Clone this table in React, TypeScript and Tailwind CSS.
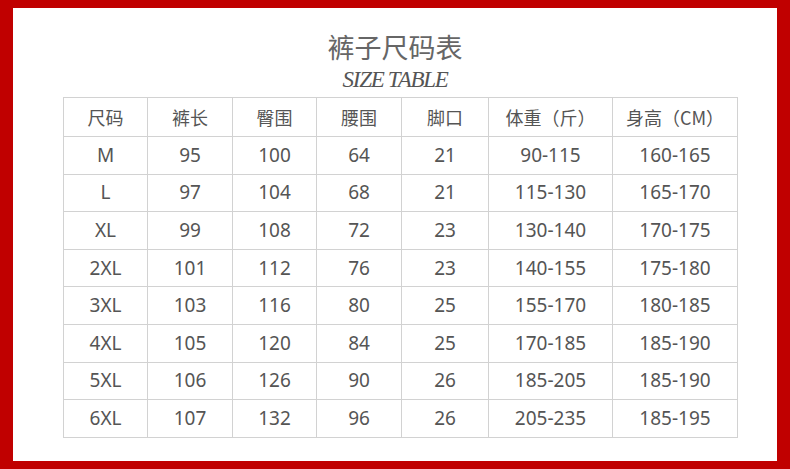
import React from "react";

const headers = ["尺码", "裤长", "臀围", "腰围", "脚口", "体重（斤）", "身高（CM）"];
const rows: string[][] = [
  ["M", "95", "100", "64", "21", "90-115", "160-165"],
  ["L", "97", "104", "68", "21", "115-130", "165-170"],
  ["XL", "99", "108", "72", "23", "130-140", "170-175"],
  ["2XL", "101", "112", "76", "23", "140-155", "175-180"],
  ["3XL", "103", "116", "80", "25", "155-170", "180-185"],
  ["4XL", "105", "120", "84", "25", "170-185", "185-190"],
  ["5XL", "106", "126", "90", "26", "185-205", "185-190"],
  ["6XL", "107", "132", "96", "26", "205-235", "185-195"],
];
const widths = [84, 85, 84, 85, 87, 124, 125];

export default function App() {
  return (
    <div className="w-[790px] h-[469px] bg-[#c00000] pt-[8px] pb-[8px] pl-[13px] pr-[13px]">
      <div className="w-full h-full bg-white flex flex-col">
        <div className="flex flex-col items-center">
          <div
            className="mt-[25px] text-[27px] leading-[27px] text-[#666666]"
            style={{ fontFamily: '"Noto Sans CJK SC", sans-serif' }}
          >
            裤子尺码表
          </div>
          <div
            className="mt-[8px] text-[23px] leading-[23px] italic tracking-[-1.3px] text-[#555555]"
            style={{ fontFamily: '"Liberation Serif", serif' }}
          >
            SIZE TABLE
          </div>
        </div>
        <table
          className="ml-[50px] mt-[6px] table-fixed border-collapse w-[674px] text-[#555555]"
          style={{ fontFamily: '"Noto Sans", "Noto Sans CJK SC", sans-serif' }}
        >
          <colgroup>
            {widths.map((w, i) => (
              <col key={i} style={{ width: w }} />
            ))}
          </colgroup>
          <thead>
            <tr className="h-[39px]">
              {headers.map((h) => (
                <th
                  key={h}
                  className="border border-[#d2d2d2] p-0 text-center align-middle font-normal text-[18px] leading-none"
                  style={{ fontFamily: '"Noto Sans CJK SC", sans-serif' }}
                >
                  {h}
                </th>
              ))}
            </tr>
          </thead>
          <tbody>
            {rows.map((r, i) => (
              <tr key={i} className="h-[37.6px]">
                {r.map((c, j) => (
                  <td
                    key={j}
                    className="border border-[#d2d2d2] p-0 text-center align-middle text-[19px] leading-none"
                  >
                    {c}
                  </td>
                ))}
              </tr>
            ))}
          </tbody>
        </table>
      </div>
    </div>
  );
}
